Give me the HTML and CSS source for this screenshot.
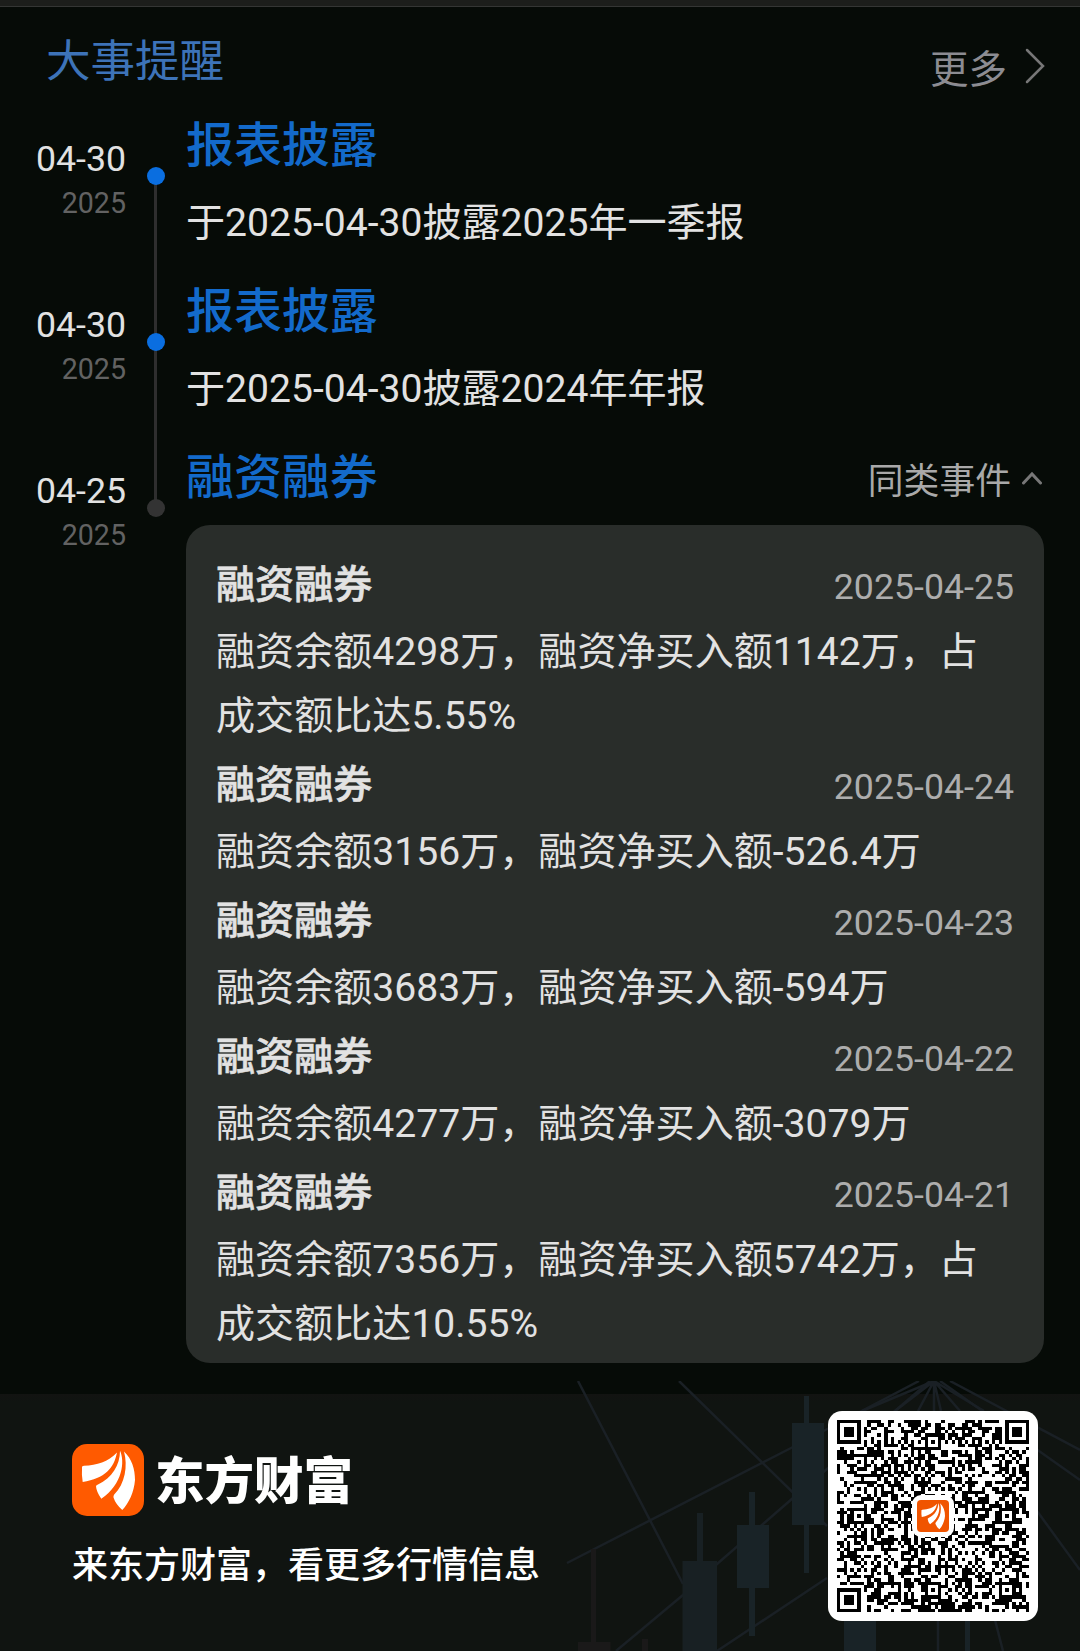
FILE: index.html
```html
<!DOCTYPE html>
<html lang="zh-CN">
<head>
  <meta charset="UTF-8">
  <title>大事提醒</title>
  <link rel="stylesheet" href="styles.css">
</head>
<body>
  <svg width="0" height="0" class="defs">
    <symbol id="logo" viewBox="0 0 72 72">
      <path d="M10 23.5Q9.6 22 12 21.8C25 21 36 18 45 8.5C42 24 33 34.500 10.700 38Q9.500 31 10 23.500Z"/>
      <path d="M48 6.700C53 17 51 40 29.300 54.700Q24.500 48 24 42.500Q24 41.200 26 40.500C40 34 48 21 48 6.700Z"/>
      <path d="M52 7.500C60 15 63 25 63 36C62 48 57 59 50.300 66Q43.500 60 41.500 53.500Q41.200 52 42.200 50.500C53 40 56 22 52 7.500Z"/>
    </symbol>
  </svg>

  <div class="top-bar"></div>

  <header class="header">
    <h1>大事提醒</h1>
    <a class="more">更多
      <svg width="20" height="36" viewBox="0 0 20 36"><path d="M2 2L18 18L2 34"/></svg>
    </a>
  </header>

  <main class="timeline">
    <section class="event">
      <div class="date"><b>04-30</b><span>2025</span></div>
      <div class="axis"><i class="dot"></i></div>
      <div class="content">
        <h2>报表披露</h2>
        <p>于2025-04-30披露2025年一季报</p>
      </div>
    </section>
    <section class="event">
      <div class="date"><b>04-30</b><span>2025</span></div>
      <div class="axis"><i class="dot"></i></div>
      <div class="content">
        <h2>报表披露</h2>
        <p>于2025-04-30披露2024年年报</p>
      </div>
    </section>
    <section class="event last">
      <div class="date"><b>04-25</b><span>2025</span></div>
      <div class="axis"><i class="dot"></i></div>
      <div class="content">
        <div class="title-row">
          <h2>融资融券</h2>
          <a class="same">同类事件
            <svg width="20" height="14" viewBox="0 0 20 14"><path d="M1.500 12L10 3L18.500 12"/></svg>
          </a>
        </div>
        <div class="panel">
          <div class="row"><h3>融资融券</h3><time>2025-04-25</time></div>
          <p>融资余额4298万，融资净买入额1142万，占成交额比达5.55%</p>
          <div class="row"><h3>融资融券</h3><time>2025-04-24</time></div>
          <p>融资余额3156万，融资净买入额-526.4万</p>
          <div class="row"><h3>融资融券</h3><time>2025-04-23</time></div>
          <p>融资余额3683万，融资净买入额-594万</p>
          <div class="row"><h3>融资融券</h3><time>2025-04-22</time></div>
          <p>融资余额4277万，融资净买入额-3079万</p>
          <div class="row"><h3>融资融券</h3><time>2025-04-21</time></div>
          <p>融资余额7356万，融资净买入额5742万，占成交额比达10.55%</p>
        </div>
      </div>
    </section>
  </main>

  <footer class="footer">
    <svg class="chart" width="520" height="270" viewBox="560 1381 520 270">
      <g class="lines">
        <path d="M578 1381L683 1584M679 1381L827 1526M567 1563L793 1447L919 1381M616 1651L683 1595L717 1564L793 1498L930 1381M717 1651L827 1578"/>
        <path d="M934 1381L862 1411M934 1381L895 1411M934 1381L918 1411M934 1381V1411M934 1381L941 1411M934 1381L960 1411M934 1381L984 1411"/>
        <path d="M950 1381L1080 1450M940 1381L1080 1480M1037 1511L1080 1570M938 1620V1651M995 1620L1003 1651"/>
      </g>
      <g class="candles">
        <path d="M804 1396h5v177h-5zM792 1423h32v102h-32zM749 1492h6v144h-6zM737 1525h32v63h-32zM844 1620h32v31h-32zM965 1620h5v31h-5z"/>
        <path class="dim" d="M697 1513h6v48h-6zM682.500 1561h34.500v90h-34.500z"/>
        <path class="dark" d="M591 1549h5v93h-5zM578 1642h32.500v9h-32.500zM642 1639h6v12h-6z"/>
      </g>
    </svg>
    <div class="brand">
      <div class="brand-row">
        <svg class="logo" width="72" height="72"><use href="#logo"/></svg>
        <strong>东方财富</strong>
      </div>
      <p>来东方财富，看更多行情信息</p>
    </div>
    <div class="qr">
      <svg id="qr" width="192" height="192" viewBox="0 0 57 57" shape-rendering="crispEdges"></svg>
      <div class="qr-logo"><svg class="logo" width="32" height="32"><use href="#logo"/></svg></div>
    </div>
  </footer>

  <script>
    const N = 57;
    let seed = 20250425;
    function rand() {
      seed = (seed * 16807) % 2147483647;
      return seed / 2147483647;
    }

    // square rings: distance from centre decides the colour
    function ring(x, y, cx, cy) {
      return Math.max(Math.abs(x - cx), Math.abs(y - cy));
    }

    function isDark(x, y) {
      const r = rand();
      for (const [cx, cy] of [[3, 3], [53, 3], [3, 53]]) {
        const d = ring(x, y, cx, cy);
        if (d <= 4) return d === 3 || d < 2;
      }
      for (const cx of [6, 28, 50]) {
        for (const cy of [6, 28, 50]) {
          const corner = (cx === 6 && cy !== 28) || (cx === 50 && cy === 6);
          const d = ring(x, y, cx, cy);
          if (!corner && d <= 2) return d !== 1;
        }
      }
      if (x === 6) return y % 2 === 0;
      if (y === 6) return x % 2 === 0;
      return r < 0.51;
    }

    // one run of dark modules per rectangle
    let d = "";
    for (let y = 0; y < N; y++) {
      let run = 0;
      for (let x = 0; x <= N; x++) {
        if (x < N && isDark(x, y)) {
          run++;
        } else if (run) {
          d += `M${x - run} ${y}h${run}v1h-${run}z`;
          run = 0;
        }
      }
    }
    document.getElementById("qr").innerHTML = `<path d="${d}"/>`;
  </script>
</body>
</html>
```
FILE: styles.css
```css
* {
  box-sizing: border-box;
}
body {
  margin: 0;
  width: 1080px;
  height: 1651px;
  display: flex;
  flex-direction: column;
  overflow: hidden;
  background: #060b07;
  color: #e2e2e2;
  font-family: Roboto, "Noto Sans CJK SC", sans-serif;
}
h1, h2, h3, p {
  margin: 0;
}
.defs {
  position: absolute;
}
.top-bar {
  flex: none;
  height: 7px;
  background: #1c1e1b;
  border-bottom: 1px solid #343634;
}

/* header */
.header {
  flex: none;
  height: 105px;
  padding: 0 35px 0 46px;
  display: flex;
  justify-content: space-between;
}
.header h1 {
  font-size: 44.500px;
  line-height: 110px;
  font-weight: 400;
  color: #3d73b8;
}
.more {
  display: flex;
  align-items: center;
  gap: 18px;
  height: 117px;
  font-size: 38.500px;
  color: #8c8c92;
}
.more svg, .same svg {
  fill: none;
  stroke: #777;
  stroke-width: 2.500;
  stroke-linecap: round;
}

/* timeline */
.event {
  display: flex;
  height: 166px;
}
.event.last {
  height: 919px;
}
.date {
  width: 126px;
  padding-top: 24px;
  display: flex;
  flex-direction: column;
  text-align: right;
}
.date b {
  font-size: 35.700px;
  line-height: 46px;
  font-weight: 400;
}
.date span {
  font-size: 28.600px;
  line-height: 42px;
  color: #626262;
}
.axis {
  width: 60px;
  display: flex;
  justify-content: center;
  padding-top: 55px;
  background: linear-gradient(#2e2e2e, #2e2e2e) 28px 0 / 3px 100% no-repeat;
}
.event:first-child .axis {
  background-position: 28px 64px;
}
.last .axis {
  background-size: 3px 64px;
}
.dot {
  width: 18px;
  height: 18px;
  border-radius: 50%;
  background: #0a6ee0;
}
.last .dot {
  background: #333;
}
.content {
  flex: 1;
}
.content h2 {
  font-size: 47.900px;
  line-height: 69px;
  font-weight: 500;
  color: #136acb;
}
.content p {
  font-size: 39.100px;
  line-height: 64px;
}
.event .content > p {
  margin-top: 10px;
}
.title-row {
  display: flex;
  justify-content: space-between;
  height: 64px;
  padding-right: 38px;
}
.same {
  display: flex;
  align-items: center;
  gap: 11px;
  height: 67px;
  font-size: 35.800px;
  color: #a9a9a9;
}
.same svg {
  stroke-width: 3;
}

.panel {
  width: 858px;
  height: 838px;
  margin-top: 17px;
  padding: 23px 30px 0;
  border-radius: 24px;
  background: #292d2a;
}
.panel p {
  width: 780px;
}
.row {
  display: flex;
  justify-content: space-between;
  height: 72px;
}
.row h3 {
  font-size: 39.100px;
  line-height: 74px;
  font-weight: 500;
  -webkit-text-stroke: 0.6px;
}
.row time {
  font-size: 35.700px;
  line-height: 78px;
  color: #adadad;
}

/* footer */
.footer {
  position: relative;
  flex: none;
  height: 257px;
  margin-top: auto;
  padding: 17px 42px 0 72px;
  display: flex;
  justify-content: space-between;
  background: linear-gradient(#121311 0, #101411 8px);
}
.chart {
  position: absolute;
  right: 0;
  bottom: 0;
}
.lines {
  fill: none;
  stroke: #1a2025;
  stroke-width: 2.500;
}
.candles {
  fill: #192327;
}
.candles .dim {
  fill: #182023;
}
.candles .dark {
  fill: #1a1919;
}
.brand {
  padding-top: 33px;
}
.brand-row {
  display: flex;
  align-items: center;
  gap: 11px;
  height: 72px;
}
.logo {
  border-radius: 15px;
  background: #ff5a00;
  fill: #fff;
}
.brand strong {
  font-size: 49.500px;
  line-height: 72px;
  padding-top: 4px;
  font-weight: 900;
  color: #fff;
}
.brand p {
  margin-top: 24px;
  font-size: 36px;
  line-height: 52px;
  font-weight: 500;
  color: #fff;
}
.qr {
  position: relative;
  width: 210px;
  height: 210px;
  padding: 9px;
  border-radius: 14px;
  background: #fff;
}
.qr-logo {
  position: absolute;
  left: 84px;
  top: 84px;
  width: 42px;
  height: 42px;
  padding: 5px;
  border-radius: 9px;
  background: #fff;
}
.qr-logo .logo {
  display: block;
  border-radius: 4px;
  background: #f05400;
}
```
